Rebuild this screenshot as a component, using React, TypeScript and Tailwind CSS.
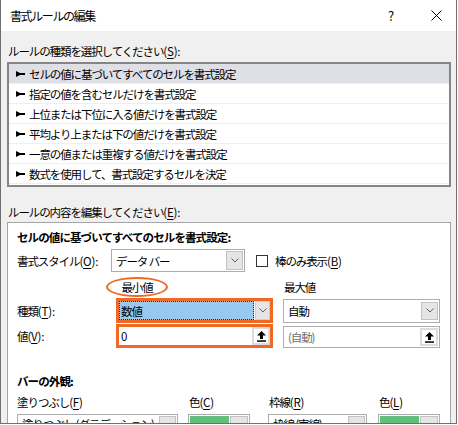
const rules = [
  'セルの値に基づいてすべてのセルを書式設定',
  '指定の値を含むセルだけを書式設定',
  '上位または下位に入る値だけを書式設定',
  '平均より上または下の値だけを書式設定',
  '一意の値または重複する値だけを書式設定',
  '数式を使用して、書式設定するセルを決定',
];

function Bullet() {
  return (
    <svg width="9" height="6" viewBox="0 0 9 6" className="shrink-0">
      <path d="M0 0 L4 2 L9 2 L9 4 L4 4 L0 6 Z" fill="#000" />
    </svg>
  );
}

function Chevron() {
  return (
    <svg width="8" height="5" viewBox="0 0 8 5">
      <path d="M0.5 0.5 L4 4 L7.5 0.5" fill="none" stroke="#606060" strokeWidth="1" />
    </svg>
  );
}

function RefIcon() {
  return (
    <svg width="9" height="11" viewBox="0 0 9 11">
      <path d="M4.5 0 L9 4.5 L6 4.5 L6 8 L3 8 L3 4.5 L0 4.5 Z" fill="#000" />
      <rect x="0" y="9.3" width="9" height="1.5" fill="#000" />
    </svg>
  );
}

function DropButton({ h = 'h-[19px]' }: { h?: string }) {
  return (
    <div className={`ml-auto mr-[1px] flex w-[17px] ${h} items-center justify-center border border-[#c2c2c2] bg-[#e5e5e5]`}>
      <Chevron />
    </div>
  );
}

function RefButton() {
  return (
    <div className="ml-auto flex h-full w-[18px] items-center justify-center bg-[#dcdcdc] p-[2px]">
      <div className="flex h-full w-full items-center justify-center bg-white">
        <RefIcon />
      </div>
    </div>
  );
}

// access key in parentheses, e.g. (S)
function Key({ k }: { k: string }) {
  return (
    <span className="tracking-[-0.2px]">
      (<u className="underline-offset-2">{k}</u>)
    </span>
  );
}

export default function App() {
  return (
    <div className="h-[425px] w-[458px] overflow-hidden bg-white font-['Noto_Sans_CJK_JP',sans-serif] text-[11.5px] leading-[16px] tracking-[-1.1px] text-black">
      <div className="flex h-[424px] w-[457px] flex-col overflow-hidden border-x border-b border-[#707070]">
        {/* title bar */}
        <div className="flex h-[31px] shrink-0 items-center bg-white pl-[9px]">
          <span className="text-[12px] tracking-[-1.4px]">書式ルールの編集</span>
          <span className="ml-auto flex w-[30px] justify-center text-[13px] tracking-normal">?</span>
          <span className="ml-[20px] mr-[10px] flex w-[20px] justify-center">
            <svg width="11" height="11" viewBox="0 0 11 11">
              <path d="M0.5 0.5 L10.5 10.5 M10.5 0.5 L0.5 10.5" stroke="#000" strokeWidth="1" />
            </svg>
          </span>
        </div>

        {/* body */}
        <div className="flex flex-1 flex-col bg-[#f0f0f0] pl-[6px]">
          <div className="mt-[12px] h-[16px] pl-[1px]">
            ルールの種類を選択してください<Key k="S" />:
          </div>

          <div className="mt-[3px] w-[444px] border-2 border-[#858585] bg-white pb-[1px]">
            {rules.map((r, i) => (
              <div
                key={r}
                className={`flex h-[20px] items-center border-b border-[#efefef] ${i === 0 ? 'bg-[#dfdfe6]' : ''}`}
              >
                <span className="ml-[7px]">
                  <Bullet />
                </span>
                <span className="ml-[4px] whitespace-nowrap">{r}</span>
              </div>
            ))}
          </div>

          <div className="mt-[17px] h-[16px] pl-[1px]">
            ルールの内容を編集してください<Key k="E" />:
          </div>

          <div className="mt-[2px] flex w-[444px] flex-1 flex-col border-x border-t border-[#a5a5a5] bg-white pl-[9px] pt-[6px]">
            <div className="h-[16px] font-bold tracking-[-0.9px]">セルの値に基づいてすべてのセルを書式設定:</div>

            {/* format style */}
            <div className="mt-[4px] flex h-[23px] items-center">
              <span className="w-[94px]">
                書式スタイル<Key k="O" />:
              </span>
              <div className="flex h-[23px] w-[134px] items-center border border-[#acacac] bg-white">
                <span className="pl-[4px]">データ バー</span>
                <DropButton />
              </div>
              <div className="ml-[11px] h-[12px] w-[12px] border border-[#333]" />
              <span className="ml-[7px]">
                棒のみ表示<Key k="B" />
              </span>
            </div>

            {/* min / max headers */}
            <div className="flex h-[26px] items-end pb-[1px]">
              <span className="w-[89px]" />
              <span className="flex h-[20px] w-[62px] items-center justify-center rounded-[50%] border-[2.5px] border-[#ee6a24]">
                最小値
              </span>
              <span className="ml-[116px] h-[20px] leading-[20px]">最大値</span>
            </div>

            {/* type */}
            <div className="flex h-[25px] items-center">
              <span className="w-[99px]">
                種類<Key k="T" />:
              </span>
              <div className="flex h-[25px] w-[157px] border-[3px] border-[#ee6a24] bg-white">
                <div className="flex flex-1 items-center border border-dotted border-[#222] bg-[#99c9ef] pl-[1px]">
                  数値
                </div>
                <div className="ml-[1px] flex w-[15px] items-center justify-center border border-[#cfcfcf] bg-[#e5e5e5]">
                  <Chevron />
                </div>
              </div>
              <div className="ml-[10px] flex h-[24px] w-[157px] items-center border border-[#adadad] bg-white">
                <span className="pl-[4px]">自動</span>
                <DropButton h="h-[18px]" />
              </div>
            </div>

            {/* value */}
            <div className="mt-[1px] flex h-[24px] items-end">
              <span className="flex h-[24px] w-[99px] items-center">
                値<Key k="V" />:
              </span>
              <div className="flex h-[24px] w-[157px] items-center border-[3px] border-[#ee6a24] bg-white">
                <span className="pl-[2px] tracking-normal">0</span>
                <RefButton />
              </div>
              <div className="ml-[10px] flex h-[22px] w-[157px] items-center border border-[#adadad] bg-white pr-[1px]">
                <span className="pl-[4px] text-[#6d6d6d]">(自動)</span>
                <div className="ml-auto h-[18px]">
                  <RefButton />
                </div>
              </div>
            </div>

            <div className="mt-[25px] h-[16px] font-bold tracking-[-0.9px]">バーの外観:</div>

            <div className="mt-[5px] flex h-[16px]">
              <span className="w-[171px]">
                塗りつぶし<Key k="F" />
              </span>
              <span className="w-[80px] pl-[1px]">
                色<Key k="C" />
              </span>
              <span className="w-[110px] pl-[1px]">
                枠線<Key k="R" />
              </span>
              <span className="pl-[1px]">
                色<Key k="L" />
              </span>
            </div>

            <div className="mt-[4px] flex h-[22px] shrink-0">
              <div className="flex w-[161px] items-start border border-[#adadad] bg-white">
                <span className="whitespace-nowrap pl-[4px] pt-[1px]">塗りつぶし (グラデーション)</span>
                <div className="ml-auto mr-[1px] mt-[1px] h-[18px] w-[17px] shrink-0 border border-[#c2c2c2] bg-[#e5e5e5]" />
              </div>
              <div className="ml-[10px] flex w-[62px] border border-[#adadad] bg-white p-[1px]">
                <div className="flex-1 bg-[#63be7b]" />
                <div className="ml-[1px] h-[18px] w-[18px] border border-[#c2c2c2] bg-[#e5e5e5]" />
              </div>
              <div className="ml-[18px] flex w-[99px] items-start border border-[#adadad] bg-white">
                <span className="whitespace-nowrap pl-[4px] pt-[1px]">枠線 (実線)</span>
                <div className="ml-auto mr-[1px] mt-[1px] h-[18px] w-[17px] shrink-0 border border-[#c2c2c2] bg-[#e5e5e5]" />
              </div>
              <div className="ml-[11px] flex w-[62px] border border-[#adadad] bg-white p-[1px]">
                <div className="flex-1 bg-[#63be7b]" />
                <div className="ml-[1px] h-[18px] w-[18px] border border-[#c2c2c2] bg-[#e5e5e5]" />
              </div>
            </div>
          </div>
        </div>
      </div>
    </div>
  );
}
